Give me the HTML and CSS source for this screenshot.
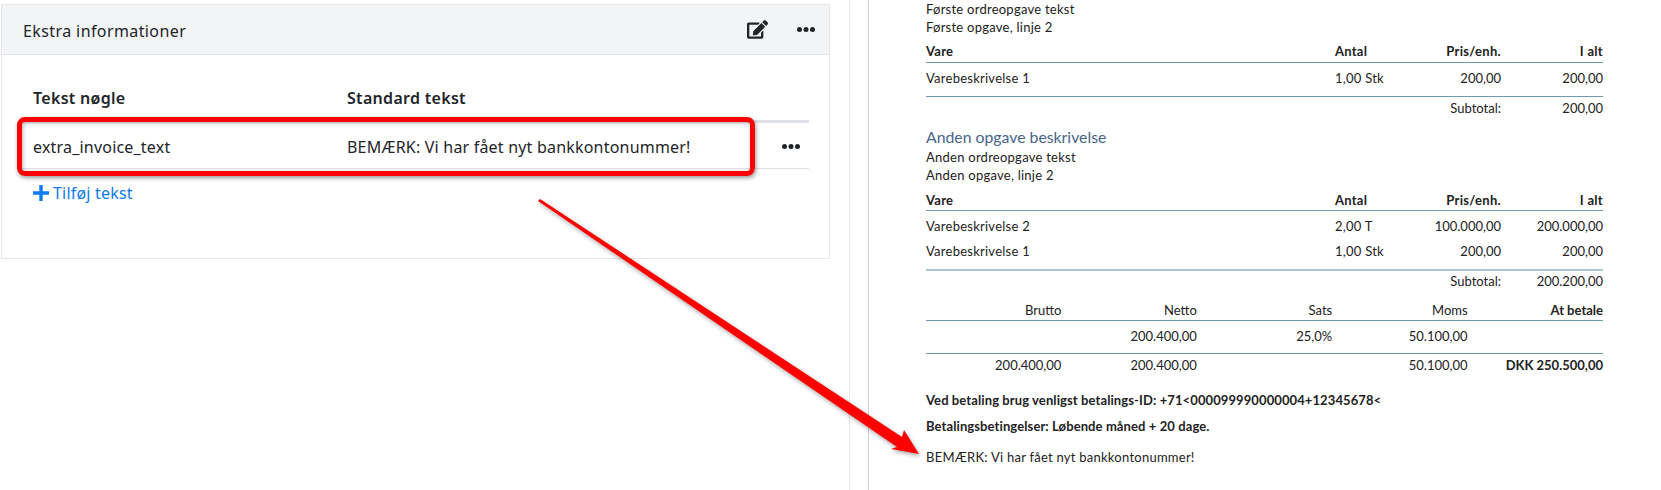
FILE: index.html
```html
<!DOCTYPE html>
<html lang="en">
<head>
  <meta charset="UTF-8" />
  <title>Ekstra informationer</title>
  <link rel="stylesheet" href="styles.css">
</head>
<body>
  <div class="page">

    <!-- settings card -->
    <div class="left">
      <div class="card">
        <div class="card-header">
          <div class="card-title">Ekstra informationer</div>
          <svg class="icon-edit" viewBox="0 0 576 512"><path d="M402.6 83.2l90.2 90.2c3.8 3.8 3.8 10 0 13.8L274.4 405.6l-92.8 10.3c-12.4 1.4-22.9-9.1-21.5-21.5l10.3-92.8L388.8 83.2c3.8-3.8 10-3.8 13.8 0zm162-22.9l-48.8-48.8c-15.2-15.2-39.9-15.2-55.2 0l-35.4 35.4c-3.8 3.8-3.8 10 0 13.8l90.2 90.2c3.8 3.8 10 3.8 13.8 0l35.4-35.4c15.2-15.3 15.2-40 0-55.2zM384 346.2V448H64V128h229.8c3.2 0 6.2-1.3 8.5-3.5l40-40c7.6-7.6 2.2-20.5-8.5-20.5H48C21.5 64 0 85.5 0 112v352c0 26.5 21.5 48 48 48h352c26.5 0 48-21.5 48-48V306.2c0-10.7-12.9-16-20.5-8.5l-40 40c-2.2 2.3-3.5 5.3-3.5 8.5z"/></svg>
          <svg class="icon-dots" viewBox="0 0 18 5"><circle cx="2.5" cy="2.5" r="2.5"/><circle cx="9" cy="2.5" r="2.5"/><circle cx="15.5" cy="2.5" r="2.5"/></svg>
        </div>
        <div class="card-body">
          <div class="text-row text-head">
            <div>Tekst nøgle</div>
            <div>Standard tekst</div>
          </div>
          <div class="text-row text-item">
            <div>extra_invoice_text</div>
            <div>BEMÆRK: Vi har fået nyt bankkontonummer!</div>
            <svg class="icon-dots" viewBox="0 0 18 5"><circle cx="2.5" cy="2.5" r="2.5"/><circle cx="9" cy="2.5" r="2.5"/><circle cx="15.5" cy="2.5" r="2.5"/></svg>
          </div>
          <a class="add-link">
            <svg class="icon-plus" viewBox="0 0 16 16"><path d="M6.3 0h3.4v6.3H16v3.4H9.700V16H6.300V9.700H0V6.300h6.300z"/></svg>
            Tilføj tekst
          </a>
        </div>
      </div>
    </div>

    <!-- invoice preview -->
    <div class="gutter">
      <div class="doc">
        <div class="doc-text">Første ordreopgave tekst</div>
        <div class="doc-text">Første opgave, linje 2</div>

        <div class="lines lines-head first">
          <div>Vare</div><div>Antal</div><div class="num">Pris/enh.</div><div class="num">I alt</div>
        </div>
        <div class="lines-body">
          <div class="lines">
            <div>Varebeskrivelse 1</div><div>1,00 Stk</div><div class="num">200,00</div><div class="num">200,00</div>
          </div>
        </div>
        <div class="lines subtotal">
          <div></div><div></div><div class="num">Subtotal:</div><div class="num">200,00</div>
        </div>

        <h2 class="task-title">Anden opgave beskrivelse</h2>
        <div class="doc-text">Anden ordreopgave tekst</div>
        <div class="doc-text">Anden opgave, linje 2</div>

        <div class="lines lines-head">
          <div>Vare</div><div>Antal</div><div class="num">Pris/enh.</div><div class="num">I alt</div>
        </div>
        <div class="lines-body lines-body-light">
          <div class="lines">
            <div>Varebeskrivelse 2</div><div>2,00 T</div><div class="num">100.000,00</div><div class="num">200.000,00</div>
          </div>
          <div class="lines">
            <div>Varebeskrivelse 1</div><div>1,00 Stk</div><div class="num">200,00</div><div class="num">200,00</div>
          </div>
        </div>
        <div class="lines subtotal">
          <div></div><div></div><div class="num">Subtotal:</div><div class="num">200.200,00</div>
        </div>

        <div class="totals totals-head">
          <div>Brutto</div><div>Netto</div><div>Sats</div><div>Moms</div><div class="strong">At betale</div>
        </div>
        <div class="totals totals-rate">
          <div></div><div>200.400,00</div><div>25,0%</div><div>50.100,00</div><div></div>
        </div>
        <div class="totals totals-sum">
          <div>200.400,00</div><div>200.400,00</div><div></div><div>50.100,00</div><div class="strong">DKK 250.500,00</div>
        </div>

        <div class="note note-pay strong">Ved betaling brug venligst betalings-ID: +71&lt;000099990000004+12345678&lt;</div>
        <div class="note note-terms strong">Betalingsbetingelser: Løbende måned + 20 dage.</div>
        <div class="note note-extra">BEMÆRK: Vi har fået nyt bankkontonummer!</div>
      </div>
    </div>

    <!-- annotations on top of the screenshot -->
    <div class="mark-box"></div>
    <svg class="mark-arrow" viewBox="0 0 1661 490">
      <polygon points="538,201 540,199 902,437 904,430 919,454 891,449 897,447"/>
    </svg>
  </div>
</body>
</html>
```

FILE: styles.css
```css
:root {
  --text: #212529;
  --line: #dee2e6;
  --blue: #0d7bf2;
  --rule: #7199b2;
}

body {
  margin: 0;
  background: white;
  color: var(--text);
  font-family: "Noto Sans", sans-serif;
}

.page {
  position: relative;
  display: flex;
  height: 490px;
  overflow: hidden;
}

.left {
  width: 850px;
  padding: 4px 19px 0 1px;
  box-sizing: border-box;
}

.card {
  height: 255px;
  box-sizing: border-box;
  border: 1px solid #e6e7e9;
}

.card-header {
  display: flex;
  align-items: center;
  height: 49px;
  padding: 0 14px 0 21px;
  background: #f3f4f6;
  border-bottom: 1px solid #e3e5e8;
}

.card-title {
  flex: 1;
  padding-top: 2px;
  font-size: 16px;
  letter-spacing: 0.4px;
}

.icon-edit {
  width: 21px;
  height: 19px;
  margin-right: 29px;
  fill: #212529;
}

.icon-dots {
  width: 18px;
  height: 5px;
  fill: #212529;
}

.card-body {
  padding: 0 20px 0 21px;
}

.text-row {
  display: grid;
  grid-template-columns: 314px 1fr 18px;
  align-items: center;
  padding: 0 9px 0 10px;
  box-sizing: border-box;
  font-size: 16px;
  letter-spacing: 0.2px;
}

.text-head {
  height: 68px;
  padding-top: 20px;
  border-bottom: 3px solid var(--line);
  font-weight: 600;
  letter-spacing: 0.3px;
}

.text-item {
  height: 46px;
  padding-top: 2px;
  border-bottom: 1px solid var(--line);
}

.add-link {
  display: flex;
  align-items: center;
  gap: 4px;
  margin: 13px 0 0 10px;
  color: var(--blue);
  font-size: 16px;
  letter-spacing: 0.2px;
}

.icon-plus {
  width: 16px;
  height: 16px;
  fill: var(--blue);
}

.gutter {
  flex: 1;
  padding-left: 18px;
  border-left: 1px solid #e8e8e8;
}

.doc {
  height: 100%;
  box-sizing: border-box;
  padding: 0 58px 0 57px;
  border-left: 1px solid #cfcfcf;
  font-family: Lato, sans-serif;
  font-size: 13px;
  letter-spacing: 0.25px;
  color: #222;
}

.doc-text {
  height: 18px;
  line-height: 18px;
}

.lines {
  display: grid;
  grid-template-columns: 409px 70px 96px 102px;
  line-height: 24px;
}

.num {
  text-align: right;
  letter-spacing: 0;
}

.lines-head {
  margin-top: 5px;
  padding-top: 2px;
  line-height: 19px;
  font-weight: 700;
  border-bottom: 1px solid var(--rule);
}

.lines-head.first {
  padding: 1px 0;
}

.lines-head .num {
  letter-spacing: 0.3px;
}

.lines-body {
  padding: 3px 0 6px;
  border-bottom: 1px solid var(--rule);
}

.lines-body-light {
  padding: 3px 0 5px;
  border-bottom: 2px solid #a9c6d3;
}

.lines-body-light .lines {
  line-height: 25px;
}

.subtotal {
  line-height: 22px;
}

.lines-body-light + .subtotal {
  line-height: 21px;
}

.task-title {
  margin: 6px 0 0;
  height: 23px;
  line-height: 23px;
  font-size: 15.8px;
  font-weight: 400;
  letter-spacing: 0;
  color: #48658a;
}

.totals {
  display: grid;
  grid-template-columns: repeat(5, 1fr);
  text-align: right;
  letter-spacing: 0;
}

.totals-head {
  margin-top: 8px;
  line-height: 20px;
  border-bottom: 1px solid var(--rule);
}

.totals-rate {
  padding-bottom: 2px;
  line-height: 30px;
  border-bottom: 1px solid var(--rule);
}

.totals-sum {
  padding-bottom: 2px;
  line-height: 22px;
}

.strong {
  font-weight: 700;
}

.note {
  line-height: 18px;
}

.note-pay {
  margin-top: 13px;
  letter-spacing: 0.1px;
}

.note-terms {
  margin-top: 8px;
  letter-spacing: 0.1px;
}

.note-extra {
  margin-top: 13px;
}

.mark-box {
  position: absolute;
  left: 17px;
  top: 117px;
  width: 738px;
  height: 59px;
  box-sizing: border-box;
  border: 5px solid #fe0000;
  border-radius: 8px;
  box-shadow: 1px 2px 4px rgba(0, 0, 0, 0.4), inset 1px 1px 4px rgba(0, 0, 0, 0.3);
}

.mark-arrow {
  position: absolute;
  left: 0;
  top: 0;
  width: 1661px;
  height: 490px;
  fill: #fe0000;
  filter: drop-shadow(1px 2px 2px rgba(0, 0, 0, 0.35));
}
```
